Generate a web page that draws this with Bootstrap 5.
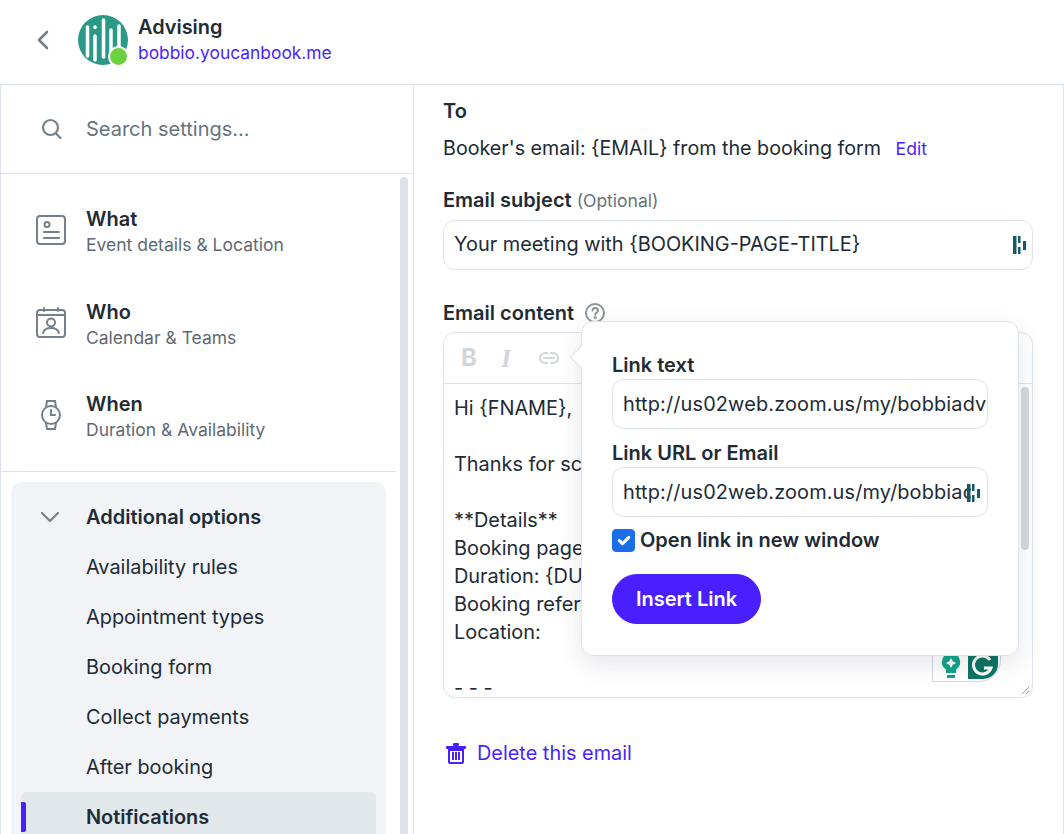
<!DOCTYPE html>
<html lang="en">
<head>
  <meta charset="UTF-8" />
  <title>Notifications</title>
  <link href="https://cdn.jsdelivr.net/npm/bootstrap@5.3.3/dist/css/bootstrap.min.css" rel="stylesheet" />
  <style>
    html, body { height: 834px; overflow: hidden; }
    body { font-family: Inter, "Liberation Sans", sans-serif; font-size: 20px; color: #212b36; background: #fff; }
    .top-bar { height: 85px; border-bottom: 1px solid #dde3ea; padding: 0 0 5px 35px; }
    .back-icon { width: 18px; margin-right: 25px; }
    .avatar-wrap { position: relative; width: 50px; height: 50px; margin-right: 10px; }
    .status-dot { position: absolute; right: -1px; bottom: -2px; width: 21px; height: 21px; border-radius: 50%; background: #6dd13f; border: 2px solid #fff; }
    .top-title { font-size: 19.9px; font-weight: 600; line-height: 26px; }
    .top-link { font-size: 17.4px; line-height: 26px; color: #4a1fff; }
    .page-body { height: 749px; }
    .side-col { width: 414px; flex: none; border-left: 1px solid #dde3ea; border-right: 1px solid #dde3ea; position: relative; overflow: hidden; }
    .search-row { height: 89px; border-bottom: 1px solid #dde3ea; padding-left: 40px; font-size: 20px; color: #68727d; }
    .search-row svg { margin-right: 24px; }
    .side-thumb { position: absolute; left: 399px; top: 92px; width: 8px; height: 680px; border-radius: 4px 4px 0 0; background: #dce1ea; }
    .side-list { width: 395px; height: 298px; padding-top: 20px; border-bottom: 1px solid #dde3ea; }
    .main-item { height: 92.5px; padding-left: 34px; align-items: flex-start; padding-top: 12px; }
    .main-icon { width: 32px; margin-right: 19px; margin-top: 8px; }
    .item-title { font-size: 20px; font-weight: 600; line-height: 26px; }
    .item-sub { font-size: 17.5px; line-height: 25px; color: #5f6973; }
    .extra-box { width: 375px; margin: 10px 0 0 10px; background: #f1f3f7; border-radius: 10px 10px 0 0; padding: 10px 10px 0; height: 400px; }
    .extra-head { height: 50px; padding-left: 19px; font-size: 20px; font-weight: 600; }
    .extra-head svg { margin-right: 26px; }
    .extra-link { height: 50px; padding: 1px 0 0 65px; font-size: 19.9px; position: relative; }
    .extra-link.is-active { background: #e2e7eb; border-radius: 6px 6px 0 0; font-weight: 600; }
    .extra-link.is-active::before { content: ""; position: absolute; left: 0; top: 10px; width: 5px; height: 30px; background: #4a1fff; border-radius: 0 2px 2px 0; }
    .main-col { flex: 1; padding: 13px 30px 0 29px; border-right: 1px solid #dde3ea; position: relative; min-width: 0; }
    .field-label { font-size: 20px; font-weight: 600; line-height: 26px; }
    .field-hint { font-size: 17.5px; font-weight: 400; color: #68727d; }
    .to-line { font-size: 19.7px; line-height: 26px; margin-top: 11px; }
    .purple-link { color: #4a1fff; font-size: 17.6px; margin-left: 9px; }
    .subject-head { margin-top: 25px; }
    .subject-box { height: 50px; border: 1px solid #dde3ea; border-radius: 12px; padding: 0 5px 0 10px; font-size: 19.9px; margin-top: 6px; }
    .content-head { margin-top: 30px; }
    .help-icon { margin-left: 10px; }
    .editor-box { height: 366px; border: 1px solid #dde3ea; border-radius: 12px; margin-top: 6px; position: relative; overflow: hidden; }
    .editor-tools { height: 51px; border-bottom: 1px solid #dde3ea; padding-left: 17px; gap: 24px; color: #d2d6da; }
    .tool-b { font-weight: 700; font-size: 24px; width: 16px; }
    .tool-i { font-family: "Liberation Serif", serif; font-style: italic; font-weight: 700; font-size: 26px; width: 14px; }
    .editor-text { padding: 10px 10px 0; font-size: 19.9px; line-height: 28px; white-space: nowrap; }
    .editor-grip { position: absolute; right: 2px; bottom: 2px; }
    .gram-tab { position: absolute; left: 488px; top: 316px; width: 69px; height: 33px; border: 1px solid #d3d8e4; border-radius: 0 0 22px 0; background: #fff; padding-left: 8px; gap: 7px; }
    .editor-thumb { position: absolute; right: 3px; top: 54px; width: 8px; height: 163px; background: #d5dade; border-radius: 4px; }
    .delete-row { margin-top: 41px; font-size: 19.9px; color: #4a1fff; gap: 11px; padding-left: 3px; }
    .link-pop { position: absolute; left: 167px; top: 236px; width: 438px; height: 335px; background: #fff; border: 1px solid #dde3ea; border-radius: 12px; box-shadow: 0 8px 24px rgba(40, 50, 70, .12); padding: 30px 30px 0; }
    .link-pop::before { content: ""; position: absolute; left: -9px; top: 27px; width: 16px; height: 16px; background: #fff; border-left: 1px solid #dde3ea; border-bottom: 1px solid #dde3ea; transform: rotate(45deg); }
    .pop-label { font-size: 20px; font-weight: 600; line-height: 26px; }
    .pop-input { height: 50px; border: 1px solid #dde3ea; border-radius: 12px; padding: 1px 0 0 10px; font-size: 19.9px; letter-spacing: .15px; overflow: hidden; white-space: nowrap; position: relative; margin-top: 1px; margin-bottom: 11px; }
    .clip-text { overflow: hidden; width: 348px; flex: none; }
    .pop-mark { position: absolute; right: 6px; top: 16px; }
    .pop-check { gap: 5px; font-size: 20px; font-weight: 600; margin-top: -3px; }
    .pop-check .form-check-input { width: 23px; height: 23px; margin: 0; border-radius: 4px; background-color: #1a6fe8; border-color: #1a6fe8; }
    .btn-insert { background: #4a1fff; border-color: #4a1fff; color: #fff; font-size: 20px; font-weight: 600; border-radius: 25px; width: 149px; height: 50px; margin-top: 19px; padding: 0; }
  </style>
</head>
<body>

  <div class="top-bar d-flex align-items-center">
    <svg class="back-icon" height="20" viewBox="0 0 18 20" fill="none" stroke="#75808a" stroke-width="2.600" stroke-linecap="round" stroke-linejoin="round"><path d="M12 2 4 10l8 8"/></svg>
    <div class="avatar-wrap">
      <svg width="50" height="50" viewBox="0 0 50 50"><circle cx="25" cy="25" r="25" fill="#2a9a88"/><g stroke="#fff" stroke-width="3.500" stroke-linecap="round"><path d="M9.500 12v29M17 12v.5M17 21v24M25.500 5v37M33 15v25M41 11v22"/></g></svg>
      <span class="status-dot"></span>
    </div>
    <div>
      <div class="top-title">Advising</div>
      <div class="top-link">bobbio.youcanbook.me</div>
    </div>
  </div>

  <div class="page-body d-flex">
    <div class="side-col">
      <div class="search-row d-flex align-items-center">
        <svg width="21" height="22" viewBox="0 0 21 22" fill="none" stroke="#75808a" stroke-width="2.200" stroke-linecap="round"><circle cx="9.500" cy="9.500" r="7.500"/><path d="m15 15.500 4.500 4.500"/></svg>
        <span>Search settings...</span>
      </div>
      <div class="side-thumb"></div>
      <div class="side-list">
        <div class="main-item d-flex">
          <svg class="main-icon" height="32" viewBox="0 0 32 32" fill="none" stroke="#75808a" stroke-width="2" stroke-linecap="round"><rect x="2" y="2" width="28" height="28" rx="3"/><circle cx="12" cy="10.500" r="2.500"/><path d="M9 18h15M9 24h15"/></svg>
          <div><div class="item-title">What</div><div class="item-sub">Event details &amp; Location</div></div>
        </div>
        <div class="main-item d-flex">
          <svg class="main-icon" height="32" viewBox="0 0 32 32" fill="none" stroke="#75808a" stroke-width="2" stroke-linecap="round"><rect x="2" y="3" width="28" height="27" rx="3"/><path d="M2 8h28M9 1v3M23 1v3"/><circle cx="16" cy="15.500" r="4"/><path d="M8 26c1-4 4-5 8-5s7 1 8 5"/></svg>
          <div><div class="item-title">Who</div><div class="item-sub">Calendar &amp; Teams</div></div>
        </div>
        <div class="main-item d-flex">
          <svg class="main-icon" height="32" viewBox="0 0 32 32" fill="none" stroke="#75808a" stroke-width="2" stroke-linecap="round"><circle cx="16" cy="16" r="9"/><path d="M11 8l1-6h8l1 6M11 24l1 6h8l1-6M16 11v5h4"/></svg>
          <div><div class="item-title">When</div><div class="item-sub">Duration &amp; Availability</div></div>
        </div>
      </div>
      <div class="extra-box">
        <div class="extra-head d-flex align-items-center">
          <svg width="20" height="12" viewBox="0 0 20 12" fill="none" stroke="#75808a" stroke-width="2.200" stroke-linecap="round" stroke-linejoin="round"><path d="M2 2l8 8 8-8"/></svg>
          <span>Additional options</span>
        </div>
        <div class="extra-link d-flex align-items-center">Availability rules</div>
        <div class="extra-link d-flex align-items-center">Appointment types</div>
        <div class="extra-link d-flex align-items-center">Booking form</div>
        <div class="extra-link d-flex align-items-center">Collect payments</div>
        <div class="extra-link d-flex align-items-center">After booking</div>
        <div class="extra-link is-active d-flex align-items-center">Notifications</div>
      </div>
    </div>

    <div class="main-col">
      <div class="field-label">To</div>
      <div class="to-line">Booker's email: {EMAIL} from the booking form <span class="purple-link">Edit</span></div>
      <div class="field-label subject-head">Email subject <span class="field-hint">(Optional)</span></div>
      <div class="subject-box d-flex align-items-center justify-content-between">
        <span>Your meeting with {BOOKING-PAGE-TITLE}</span>
        <svg width="14" height="18" viewBox="0 0 14 18" fill="#17586a"><rect x="0" y="0" width="3.500" height="18"/><rect x="5" y="0" width="2.500" height="7"/><rect x="5" y="11" width="2.500" height="7"/><rect x="10" y="5" width="3" height="9"/></svg>
      </div>
      <div class="field-label content-head d-flex align-items-center">Email content
        <svg class="help-icon" width="22" height="22" viewBox="0 0 22 22" fill="none" stroke="#8d959c" stroke-width="2"><circle cx="11" cy="11" r="9"/><path d="M8.500 8.500c0-3.500 5.500-3.500 5.500 0 0 2-2.800 2-2.800 4.200" stroke-linecap="round"/><circle cx="11.200" cy="15.500" r=".6"/></svg>
      </div>
      <div class="editor-box">
        <div class="editor-tools d-flex align-items-center">
          <span class="tool-b">B</span>
          <span class="tool-i">I</span>
          <svg width="20" height="14" viewBox="0 0 20 14" fill="none" stroke="#d2d6da" stroke-width="2.200" stroke-linecap="round"><path d="M8 2H6a5 5 0 0 0 0 10h2M12 2h2a5 5 0 0 1 0 10h-2M5 7h10"/></svg>
        </div>
        <div class="editor-text">Hi {FNAME},<br><br>Thanks for sc<br><br>**Details**<br>Booking page<br>Duration: {DU<br>Booking refer<br>Location:<br><br>- - -</div>
        <div class="gram-tab d-flex align-items-center">
          <svg width="20" height="26" viewBox="0 0 20 26"><path d="M10 0a9 9 0 0 1 5 16.500V20H5v-3.500A9 9 0 0 1 10 0z" fill="#0fa588"/><path d="M10 5l1.800 3.200L15 10l-3.200 1.800L10 15l-1.800-3.200L5 10l3.200-1.800z" fill="#fff"/><rect x="6" y="22" width="8" height="3" fill="#0fa588"/></svg>
          <svg width="30" height="27" viewBox="0 0 30 27"><path d="M0 0h30v12a15 15 0 0 1-15 15H0z" fill="#0c7562"/><path d="M22 8a9 9 0 1 0 1 8h-7" fill="none" stroke="#fff" stroke-width="3"/></svg>
        </div>
        <svg class="editor-grip" width="9" height="9" viewBox="0 0 9 9" stroke="#9aa1a8" stroke-width="1"><path d="M1 8l7-7M5 8l3-3"/></svg>
        <div class="editor-thumb"></div>
      </div>
      <div class="delete-row d-flex align-items-center">
        <svg width="20" height="21" viewBox="0 0 20 21" fill="#4a1fff"><rect x="0" y="3" width="20" height="3" rx="1"/><rect x="7" y="0" width="6" height="3" rx="1"/><path d="M2 6h16v13a2 2 0 0 1-2 2H4a2 2 0 0 1-2-2zM4 8v11h12V8z"/><rect x="6" y="9" width="2" height="8"/><rect x="9" y="9" width="2" height="8"/><rect x="12" y="9" width="2" height="8"/></svg>
        <span>Delete this email</span>
      </div>

      <div class="link-pop">
        <div class="pop-label">Link text</div>
        <div class="pop-input d-flex align-items-center">http://us02web.zoom.us/my/bobbiadv</div>
        <div class="pop-label">Link URL or Email</div>
        <div class="pop-input d-flex align-items-center">
          <span class="clip-text">http://us02web.zoom.us/my/bobbiadv</span>
          <svg class="pop-mark" width="14" height="18" viewBox="0 0 14 18" fill="#17586a"><rect x="0" y="0" width="3.500" height="18"/><rect x="5" y="0" width="2.500" height="7"/><rect x="5" y="11" width="2.500" height="7"/><rect x="10" y="5" width="3" height="9"/></svg>
        </div>
        <div class="pop-check d-flex align-items-center">
          <input class="form-check-input" type="checkbox" checked>
          <span>Open link in new window</span>
        </div>
        <button class="btn btn-insert d-block" type="button">Insert Link</button>
      </div>
    </div>
  </div>

</body>
</html>
